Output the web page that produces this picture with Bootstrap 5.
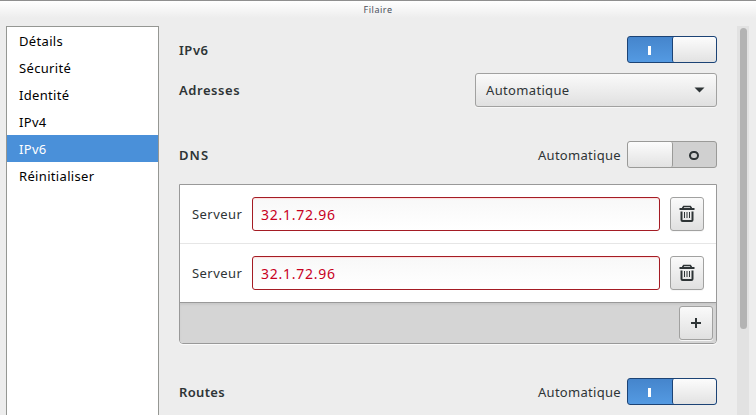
<!DOCTYPE html>
<html lang="fr">
<head>
<meta charset="utf-8">
<title>Filaire</title>
<link href="https://cdn.jsdelivr.net/npm/bootstrap@5.3.0/dist/css/bootstrap.min.css" rel="stylesheet">
<style>
body{background:#ededed;color:#2e3436;font:13px/20px "Noto Sans","Open Sans",sans-serif;height:415px}
.titlebar{height:26px;flex:none;border-top:1px solid #8f8f8f;background:linear-gradient(#fff,#ededed 17px);font-size:9px;line-height:17px;color:#4a505b;letter-spacing:.55px}
.sections{width:153px;margin-left:6px;background:#fff;border:1px solid #959793;border-bottom:0;border-radius:0}
.sections .list-group-item{height:27px;padding:4px 12px 2px;line-height:21px;border:0;color:#000;background:transparent;border-radius:0;letter-spacing:.33px}
.sections .list-group-item.active{background:#4a90d9;color:#fff;margin:0}
.settings{width:538px;margin-left:20px;padding-top:10px}
.settings h2{font-size:13px;line-height:20px;font-weight:600;margin:0;color:#2e3436;letter-spacing:.55px}
.settings h2.tight{letter-spacing:.35px}
.settings h2.wide{letter-spacing:1.1px}
.line-toggle{height:27px}
.section-gap{margin-top:34px}
.toggle{width:90px;height:27px;padding:0;display:flex;border:1px solid #9a9a98;border-radius:3px;overflow:hidden;background:#d0d0d0}
.toggle span{flex:1;display:flex;align-items:center;justify-content:center;padding-top:2px}
.toggle .knob{background:linear-gradient(#fcfcfc,#e2e2e2);border-right:1px solid #9a9a98;border-radius:2px}
.toggle.on{border-color:#1c4375;background:linear-gradient(#4585cc,#549ae2)}
.toggle.on .knob{border-right:0;border-left:1px solid #1c4375}
.mark-on{width:3px;height:9px;background:#fff}
.mark-off{width:10px;height:9px;border:2px solid #2e3436;border-radius:5px}
.raised{background:linear-gradient(#fafafa,#e0e0e0);border:1px solid #a1a1a0;border-radius:3px;color:#2e3436;box-shadow:0 1px 0 #f7f7f7}
.choice{width:242px;height:34px;padding:0 11px 0 10px;font-size:13px;letter-spacing:.34px}
.line-choice{margin-top:10px}
.auto-text{letter-spacing:.3px;margin-right:6px}
.servers{margin-top:16px;height:160px;border:1px solid #999;border-radius:0 0 4px 4px;background:#fff;overflow:hidden;box-shadow:0 1px 0 #fafafa}
.server{height:59px;padding:0 12px;font-size:13px}
.server:first-child{height:58px}
.server+.server{border-top:1px solid #e6e6e6}
.server label{width:60px;letter-spacing:.45px}
.server .form-control{height:34px;width:408px;flex:none;padding:0 8px;border:1px solid #a41c24;border-radius:3px;color:#c8001f;font-size:14px;letter-spacing:.75px;background:linear-gradient(#f8f8f8,#fff);box-shadow:inset 0 1px 1px #ffdcdc}
.square{width:34px;height:34px;padding:0;display:flex;align-items:center;justify-content:center;flex:none}
.toolbar-add{height:41px;border-top:1px solid #999;background:#d5d5d5;box-shadow:inset 0 2px 2px #c9c9c9;padding:0 3px}
.track{width:12px;margin-left:20px;background:#e2e2e2;padding:2px 2px 0 3px}
.thumb{height:301px;width:7px;border-radius:4px;background:#b3b3b3}
</style>
<script src="https://cdn.jsdelivr.net/npm/bootstrap@5.3.0/dist/js/bootstrap.bundle.min.js"></script>
</head>
<body class="d-flex flex-column overflow-hidden">
<header class="titlebar text-center">Filaire</header>
<main class="d-flex flex-grow-1 overflow-hidden">
  <nav class="sections list-group flex-shrink-0">
    <a class="list-group-item">Détails</a>
    <a class="list-group-item">Sécurité</a>
    <a class="list-group-item">Identité</a>
    <a class="list-group-item">IPv4</a>
    <a class="list-group-item active">IPv6</a>
    <a class="list-group-item">Réinitialiser</a>
  </nav>
  <section class="settings flex-shrink-0">
    <div class="line-toggle d-flex align-items-center justify-content-between">
      <h2>IPv6</h2>
      <button class="toggle on" aria-label="IPv6"><span><i class="mark-on"></i></span><span class="knob"></span></button>
    </div>
    <div class="line-choice d-flex align-items-center justify-content-between">
      <h2>Adresses</h2>
      <button class="choice raised d-flex align-items-center justify-content-between">Automatique
        <svg width="11" height="6" viewBox="0 0 11 6"><path d="M.5.5h10l-5 5z" fill="#2e3436"/></svg></button>
    </div>
    <div class="line-toggle section-gap d-flex align-items-center">
      <h2 class="wide me-auto">DNS</h2>
      <span class="auto-text">Automatique</span>
      <button class="toggle" aria-label="DNS automatique"><span class="knob"></span><span><i class="mark-off"></i></span></button>
    </div>
    <div class="servers">
      <div class="server d-flex align-items-center">
        <label for="dns1">Serveur</label>
        <input id="dns1" class="form-control" value="32.1.72.96">
        <button class="square raised ms-auto" aria-label="Supprimer"><svg width="16" height="18" viewBox="0 0 16 18" fill="none" stroke="#2e3436"><path d="M3.5 3.2l1.2-1.7h6.6l1.2 1.7" stroke-width="1.6"/><path d="M.5 4h15" stroke-width="2"/><path d="M2.5 6.5V15q0 1 1 1h9q1 0 1-1V6.5" stroke-width="2"/><path d="M5.5 7v6M8 7v6M10.5 7v6"/></svg></button>
      </div>
      <div class="server d-flex align-items-center">
        <label for="dns2">Serveur</label>
        <input id="dns2" class="form-control" value="32.1.72.96">
        <button class="square raised ms-auto" aria-label="Supprimer"><svg width="16" height="18" viewBox="0 0 16 18" fill="none" stroke="#2e3436"><path d="M3.5 3.2l1.2-1.7h6.6l1.2 1.7" stroke-width="1.6"/><path d="M.5 4h15" stroke-width="2"/><path d="M2.5 6.5V15q0 1 1 1h9q1 0 1-1V6.5" stroke-width="2"/><path d="M5.5 7v6M8 7v6M10.5 7v6"/></svg></button>
      </div>
      <div class="toolbar-add d-flex align-items-center justify-content-end">
        <button class="square raised" aria-label="Ajouter"><svg width="10" height="10" viewBox="0 0 10 10"><path d="M0 5h10M5 0v10" stroke="#2e3436" stroke-width="2"/></svg></button>
      </div>
    </div>
    <div class="line-toggle section-gap d-flex align-items-center">
      <h2 class="tight me-auto">Routes</h2>
      <span class="auto-text">Automatique</span>
      <button class="toggle on" aria-label="Routes automatiques"><span><i class="mark-on"></i></span><span class="knob"></span></button>
    </div>
  </section>
  <div class="track flex-shrink-0"><div class="thumb"></div></div>
</main>
</body>
</html>
